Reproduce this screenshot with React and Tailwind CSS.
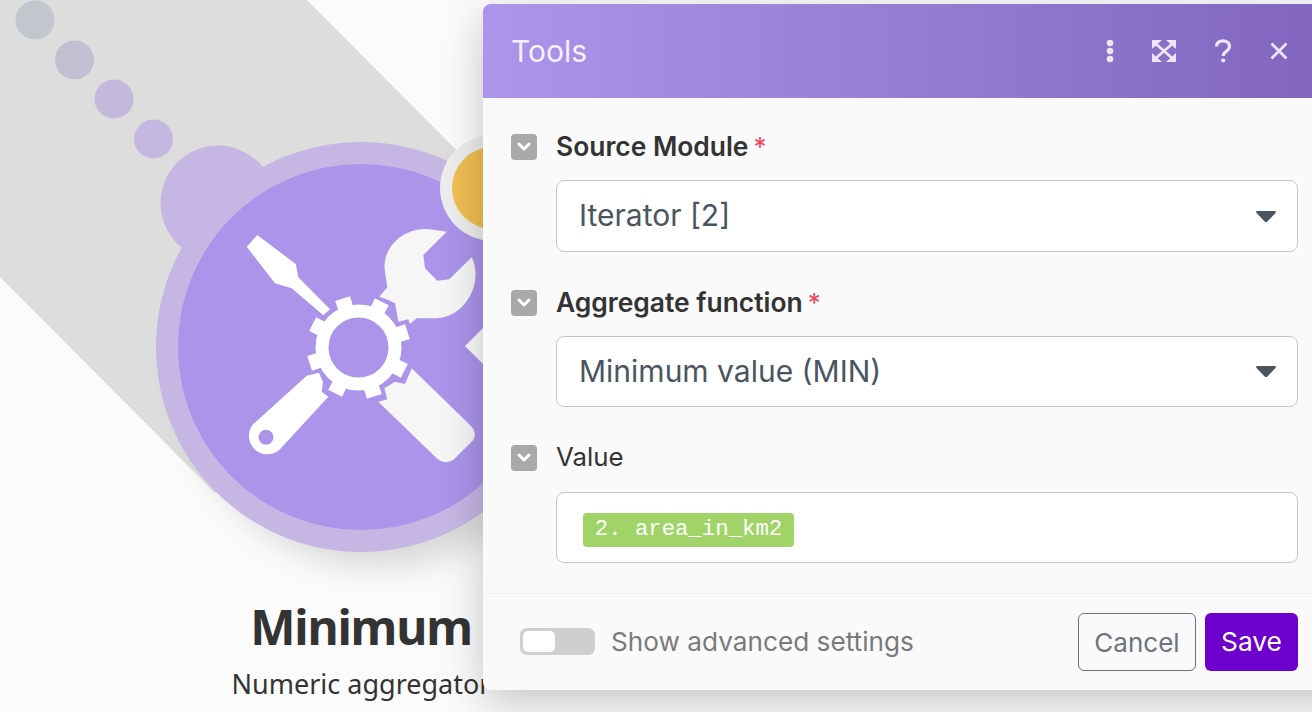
import React from 'react';

// gear teeth around the hub, one polygon per tooth
const GEAR = { x: 358.5, y: 347.5 };
const teeth = [0, 1, 2, 3, 4, 5, 6, 7].map((i) => {
  const a = ((-108 + i * 45) * Math.PI) / 180;
  const pt = (r, off) => {
    const px = GEAR.x + r * Math.cos(a + off);
    const py = GEAR.y + r * Math.sin(a + off);
    return `${px.toFixed(1)},${py.toFixed(1)}`;
  };
  return [pt(38, -0.2), pt(52, -0.15), pt(52, 0.15), pt(38, 0.2)].join(' ');
});

const ModuleArt = () => (
  <svg className="absolute left-0 top-0" width="490" height="712" viewBox="0 0 490 712">
    <defs>
      <filter id="soft" x="-20%" y="-20%" width="140%" height="140%">
        <feGaussianBlur stdDeviation="16" />
      </filter>
    </defs>
    <polygon points="307,0 0,0 0,277 215,493 507,201" fill="#dddddd" />
    <circle cx="380" cy="372" r="195" fill="#000" fillOpacity="0.14" filter="url(#soft)" />
    <circle cx="35" cy="20" r="19.5" fill="#c2c6cd" />
    <circle cx="74.5" cy="60" r="19.5" fill="#c3bfd3" />
    <circle cx="114" cy="99" r="19.5" fill="#c3b9db" />
    <circle cx="153.5" cy="139" r="19.5" fill="#c5b8e0" />
    <circle cx="218" cy="203" r="57.5" fill="#c5b6e3" />
    <circle cx="361" cy="347" r="205" fill="#c5b6e3" />
    <circle cx="361" cy="347" r="183" fill="#ab94ea" />
    <circle cx="493" cy="188" r="53" fill="#ededed" />
    <circle cx="493" cy="188" r="41" fill="#f0bf52" />
    <polygon points="465,346 483,328 490,328 490,364 483,364" fill="#fafafa" />

    {/* screwdriver */}
    <polygon
      points="246.7,246.7 257.3,235 295.7,264 298.3,277.3 330,309.3 323.3,315.3 291.7,288.3 275,283.3"
      fill="#fff"
    />
    {/* wrench */}
    <path
      d="M379.3 296.7 L387.3 287.3 L385 271.7 C381 247 405 226 430 229.3 L446.7 231.7 L423.3 255 L425 268.3 L437.3 280.7 L449.3 279.3 L471.7 257.3 C478 270 476 285 470 296 C462 311 448 318 436.7 318.3 L416.7 318.3 L410 324 L408.3 319.3 L398.3 321.7 L395 303.3 L388.3 300 Z"
      fill="#f6f6f6"
    />
    {/* handle, lower right */}
    <path
      d="M411.7 368.3 L471.7 426.7 Q477 433 473.3 440 L453.3 460 Q445 465 436.7 458.3 L378.3 401.7 L387.3 399.3 L384.3 388.3 L395 381.7 L405 384 Z"
      fill="#f6f6f6"
    />
    {/* handle, lower left */}
    <path
      d="M306.7 375.7 L319 372.7 L323 382 L321.7 391.7 L328.3 396.7 L279 450.3 A18.5 18.5 0 0 1 253 424.3 Z"
      fill="#fff"
    />
    <circle cx="266" cy="437.3" r="7.5" fill="#ab94ea" />
    {/* gear */}
    <circle cx={GEAR.x} cy={GEAR.y} r="36.5" fill="none" stroke="#fff" strokeWidth="13" />
    {teeth.map((points) => (
      <polygon key={points} points={points} fill="#fff" />
    ))}
  </svg>
);

const HeaderIcons = () => (
  <div className="flex items-center text-[#ece6f8]">
    <svg width="8" height="24" viewBox="0 0 8 24" className="mr-[37px]" fill="currentColor">
      <circle cx="4" cy="4" r="3.3" />
      <circle cx="4" cy="12" r="3.3" />
      <circle cx="4" cy="20" r="3.3" />
    </svg>
    <svg width="26" height="24" viewBox="0 0 26 24" className="mr-[38px]" fill="currentColor">
      <path d="M1 1h10L1 10zM25 1H15l10 9zM1 23h10L1 14zM25 23H15l10-9z" />
      <path d="M5 5l16 14M21 5L5 19" strokeWidth="2.6" stroke="currentColor" fill="none" />
    </svg>
    <svg width="16" height="24" viewBox="0 0 16 24" className="mr-[39px]" fill="none" stroke="currentColor">
      <path d="M1.5 7.5C1.5 4 4.5 1.8 8 1.8s6.5 2.2 6.5 5.6c0 4.8-6.3 4.8-6.3 9.6" strokeWidth="3.2" />
      <circle cx="8.2" cy="21.5" r="2.1" fill="currentColor" stroke="none" />
    </svg>
    <svg width="18" height="18" viewBox="0 0 18 18" fill="none" stroke="currentColor" strokeWidth="2.8">
      <path d="M1.5 1.5l15 15M16.5 1.5l-15 15" />
    </svg>
  </div>
);

const Collapse = () => (
  <span className="mt-[4px] flex h-[26px] w-[26px] shrink-0 items-center justify-center rounded-[4px] bg-[#a9a9a9]">
    <svg width="14" height="10" viewBox="0 0 14 10" fill="none" stroke="#fff" strokeWidth="3" strokeLinecap="round" strokeLinejoin="round">
      <path d="M2 2l5 5 5-5" />
    </svg>
  </span>
);

const Caret = () => (
  <svg width="20" height="11" viewBox="0 0 20 11" fill="#4a5560">
    <path d="M1.5 0h17c1.4 0 1.8 1.2 1 2L11.4 10.4c-.8.8-2 .8-2.8 0L.5 2C-.3 1.2.1 0 1.5 0z" />
  </svg>
);

const Row = ({ label, required, className, children }) => (
  <div className={`flex gap-[19px] ${className}`}>
    <Collapse />
    <div className="min-w-0 flex-1">
      <div className="flex h-[32px] items-center pt-[1px] text-[#333333]">
        <span className={required ? 'text-[26.4px] font-semibold' : 'text-[25.8px]'}>{label}</span>
        {required && <span className="ml-[5px] text-[26px] text-[#f0455f]">*</span>}
      </div>
      {children}
    </div>
  </div>
);

const Select = ({ value, className }) => (
  <div className={`flex items-center justify-between rounded-[8px] border border-[#c9c5ce] bg-white pl-[22px] pr-[21px] text-[30px] text-[#4a5560] ${className}`}>
    <span className="-mt-[1px]">{value}</span>
    <Caret />
  </div>
);

const App = () => {
  return (
    <div className="relative h-[712px] w-[1312px] overflow-hidden bg-[#fbfbfb] font-['Inter',sans-serif]">
      <ModuleArt />

      {/* module caption, the panel covers its right edge */}
      <div className="absolute left-[61px] top-[596px] w-[600px] text-center font-['Noto_Sans',sans-serif] text-[#333333]">
        <div className="text-[48px] font-bold leading-[62px] tracking-[-1.2px]">Minimum</div>
        <div className="mt-[8px] text-[27px] leading-[36px]">Numeric aggregator</div>
      </div>

      {/* Tools dialog */}
      <div className="absolute left-[483px] top-[4px] h-[686px] w-[829px] overflow-hidden rounded-l-[8px] bg-[#fafafa]">
        <div className="flex h-[94px] items-center justify-between bg-gradient-to-r from-[#ac95ea] to-[#8266bf] pl-[28px] pr-[24px]">
          <span className="text-[30px] text-[#f5f1fc]">Tools</span>
          <HeaderIcons />
        </div>
        <div className="pl-[28px] pr-[14px] pt-[32px]">
          <Row label="Source Module" required>
            <Select value="Iterator [2]" className="mt-[18px] h-[72px]" />
          </Row>
          <Row label="Aggregate function" required className="mt-[34px]">
            <Select value="Minimum value (MIN)" className="mt-[18px] h-[71px]" />
          </Row>
          <Row label="Value" className="mt-[34px]">
            <div className="mt-[19px] flex h-[71px] items-center rounded-[8px] border border-[#c9c5ce] bg-white pl-[26px] pt-[5px]">
              <span className="flex h-[34px] w-[211px] items-center justify-center rounded-[4px] bg-[#a0d468] font-['Liberation_Mono',monospace] text-[22.3px] text-white">
                2. area_in_km2
              </span>
            </div>
          </Row>
        </div>
        <div className="mt-[30px] flex h-[97px] items-center justify-between border-t border-[#f0f0f0] pl-[37px] pr-[14px]">
          <div className="flex items-center gap-[16px]">
            <span className="flex h-[27px] w-[75px] items-center rounded-[7px] bg-[#cfcfcf] pl-[3px]">
              <span className="h-[21px] w-[32px] rounded-[5px] bg-white" />
            </span>
            <span className="text-[26.2px] text-[#7a7a7a]">Show advanced settings</span>
          </div>
          <div className="flex items-center gap-[9px]">
            <button className="flex h-[58px] w-[118px] items-center justify-center rounded-[6px] border border-[#6b7280] text-[26px] text-[#6c757d]">
              Cancel
            </button>
            <button className="flex h-[58px] w-[93px] items-center justify-center rounded-[6px] bg-[#6d00cc] text-[26.3px] text-white">
              Save
            </button>
          </div>
        </div>
      </div>
      <div className="pointer-events-none absolute left-[483px] top-[4px] h-[686px] w-[900px] rounded-l-[8px] shadow-[0_12px_44px_rgba(0,0,0,0.22)]" />
    </div>
  );
};

export default App;
